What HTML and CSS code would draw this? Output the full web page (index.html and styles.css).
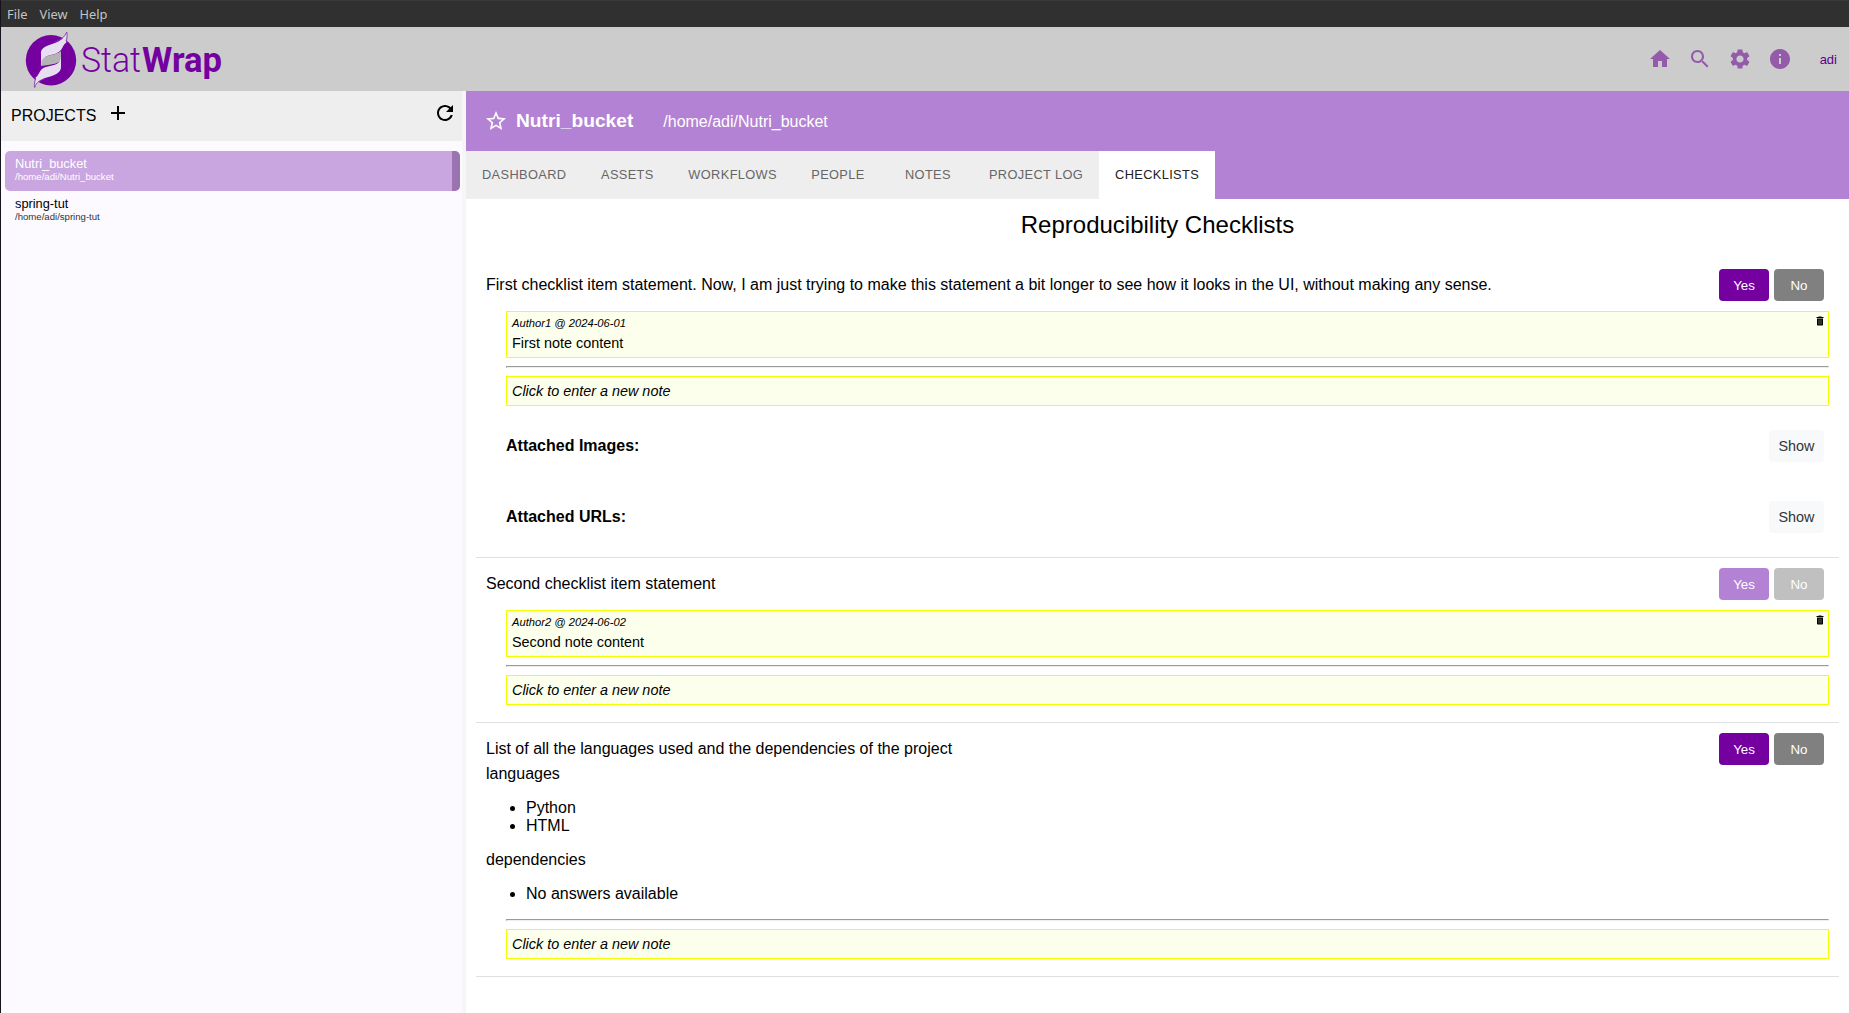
FILE: index.html
```html
<!DOCTYPE html>
<html lang="en">
<head>
<meta charset="utf-8">
<title>StatWrap</title>
<link rel="stylesheet" href="styles.css">
</head>
<body>
<svg class="defs" width="0" height="0">
  <symbol id="trash" viewBox="0 0 24 24"><path d="M6 19c0 1.1.9 2 2 2h8c1.1 0 2-.9 2-2V7H6v12zM19 4h-3.5l-1-1h-5l-1 1H5v2h14V4z"/><path class="slots" d="M10 9v10M14 9v10"/></symbol>
</svg>
<div class="window">
  <nav class="menubar"><span>File</span><span>View</span><span>Help</span></nav>
  <header class="topbar">
    <svg class="logo" width="200" height="64" viewBox="0 0 200 64">
      <circle cx="26" cy="33.3" r="25.2" fill="#7400a0"/>
      <path d="M16 39C15.500 33 17 31 21 29.500C27 27.500 33 27 36 24V33C34 36.500 28 37 23 38Z" fill="#b4b4b4"/>
      <path d="M16 38.500V27C15.500 23 18 20.500 23 18.500C30 16 39 13.500 41.500 6C42 10 39.500 12 41.500 15.500C38 17.500 38 21 35.500 23.500C32 27.500 26 27.500 21 29.500C17.500 31 16 34 16 38.500Z" fill="#e8def2"/>
      <path d="M36 27.500V40C36 44 33 46.500 28 48.500C21 51 13 52 10 59.500C9.500 56 12 53.500 10.500 50.500C13.500 49 14 44.500 17 42C20.500 39 27 39 31.500 37C35 35.500 36 32 36 27.500Z" fill="#e8def2"/>
      <path d="M41.800 5C39 11 35 13 30 15M41.800 5C43 10 41 12 41.800 15.500M9.700 60.500C11 55 16 53 20 51.500M9.700 60.500C8.500 56 11 53 10 50" fill="none" stroke="#8b3cb3" stroke-width=".9"/>
      <text x="56" y="45" class="logo-light" textLength="60" lengthAdjust="spacingAndGlyphs">Stat</text>
      <text x="117" y="45" class="logo-bold" textLength="80" lengthAdjust="spacingAndGlyphs">Wrap</text>
    </svg>
    <div class="actions">
      <svg class="icon" viewBox="0 0 24 24"><path d="M10 20v-6h4v6h5v-8h3L12 3 2 12h3v8z"/></svg>
      <svg class="icon" viewBox="0 0 24 24"><path d="M15.5 14h-.79l-.28-.27C15.41 12.59 16 11.11 16 9.5 16 5.91 13.09 3 9.5 3S3 5.91 3 9.5 5.91 16 9.5 16c1.61 0 3.09-.59 4.23-1.57l.27.28v.79l5 4.99L20.49 19l-4.99-5zm-6 0C7.01 14 5 11.99 5 9.5S7.01 5 9.5 5 14 7.01 14 9.5 11.99 14 9.5 14z"/></svg>
      <svg class="icon" viewBox="0 0 24 24"><path d="M19.14 12.94c.04-.3.06-.61.06-.94 0-.32-.02-.64-.07-.94l2.03-1.58c.18-.14.23-.41.12-.61l-1.92-3.32c-.12-.22-.37-.29-.59-.22l-2.39.96c-.5-.38-1.03-.7-1.62-.94l-.36-2.54c-.04-.24-.24-.41-.48-.41h-3.84c-.24 0-.43.17-.47.41l-.36 2.54c-.59.24-1.13.57-1.62.94l-2.39-.96c-.22-.08-.47 0-.59.22L2.74 8.87c-.12.21-.08.47.12.61l2.03 1.58c-.05.3-.09.63-.09.94s.02.64.07.94l-2.03 1.58c-.18.14-.23.41-.12.61l1.92 3.32c.12.22.37.29.59.22l2.39-.96c.5.38 1.03.7 1.62.94l.36 2.54c.05.24.24.41.48.41h3.84c.24 0 .44-.17.47-.41l.36-2.54c.59-.24 1.13-.56 1.62-.94l2.39.96c.22.08.47 0 .59-.22l1.92-3.32c.12-.22.07-.47-.12-.61l-2.01-1.58zM12 15.6c-1.98 0-3.6-1.62-3.6-3.6s1.62-3.6 3.6-3.6 3.6 1.62 3.6 3.6-1.62 3.6-3.6 3.6z"/></svg>
      <svg class="icon" viewBox="0 0 24 24"><path d="M12 2C6.48 2 2 6.48 2 12s4.48 10 10 10 10-4.48 10-10S17.52 2 12 2zm1 15h-2v-6h2v6zm0-8h-2V7h2v2z"/></svg>
      <span class="user">adi</span>
    </div>
  </header>
  <div class="body">
    <aside class="sidebar">
      <div class="side-head">
        <span>PROJECTS</span>
        <svg class="add" viewBox="0 0 24 24"><path d="M19 13h-6v6h-2v-6H5v-2h6V5h2v6h6v2z"/></svg>
        <svg class="refresh" viewBox="0 0 24 24"><path d="M17.65 6.35C16.2 4.9 14.21 4 12 4c-4.42 0-7.99 3.58-7.99 8s3.57 8 7.99 8c3.73 0 6.84-2.55 7.73-6h-2.08c-.82 2.33-3.04 4-5.65 4-3.31 0-6-2.69-6-6s2.69-6 6-6c1.66 0 3.14.69 4.22 1.78L13 11h7V4l-2.35 2.35z"/></svg>
      </div>
      <div class="project selected"><div class="name">Nutri_bucket</div><div class="dir">/home/adi/Nutri_bucket</div></div>
      <div class="project"><div class="name">spring-tut</div><div class="dir">/home/adi/spring-tut</div></div>
    </aside>
    <main class="main">
      <div class="project-head">
        <svg class="star" viewBox="0 0 24 24"><path d="M22 9.24l-7.19-.62L12 2 9.19 8.63 2 9.24l5.46 4.73L5.82 21 12 17.27 18.18 21l-1.63-7.03L22 9.24zM12 15.4l-3.76 2.27 1-4.28-3.32-2.88 4.38-.38L12 6.1l1.71 4.04 4.38.38-3.32 2.88 1 4.28L12 15.4z"/></svg>
        <span class="project-title">Nutri_bucket</span>
        <span class="project-path">/home/adi/Nutri_bucket</span>
      </div>
      <div class="tabs">
        <div class="tab">DASHBOARD</div><div class="tab">ASSETS</div><div class="tab">WORKFLOWS</div><div class="tab">PEOPLE</div><div class="tab">NOTES</div><div class="tab">PROJECT LOG</div><div class="tab active">CHECKLISTS</div>
      </div>
      <div class="content">
        <h2>Reproducibility Checklists</h2>
        <section class="item">
          <div class="row"><span>First checklist item statement. Now, I am just trying to make this statement a bit longer to see how it looks in the UI, without making any sense.</span><div class="answers"><button class="yes">Yes</button><button class="no">No</button></div></div>
          <div class="notes">
            <div class="note"><div class="author">Author1 @ 2024-06-01</div><div class="text">First note content</div><svg class="trash"><use href="#trash"/></svg></div>
            <hr>
            <div class="new-note">Click to enter a new note</div>
          </div>
          <div class="attached"><b>Attached Images:</b><button class="show">Show</button></div>
          <div class="attached"><b>Attached URLs:</b><button class="show">Show</button></div>
        </section>
        <section class="item">
          <div class="row"><span>Second checklist item statement</span><div class="answers faded"><button class="yes">Yes</button><button class="no">No</button></div></div>
          <div class="notes">
            <div class="note"><div class="author">Author2 @ 2024-06-02</div><div class="text">Second note content</div><svg class="trash"><use href="#trash"/></svg></div>
            <hr>
            <div class="new-note">Click to enter a new note</div>
          </div>
        </section>
        <section class="item">
          <div class="row"><span>List of all the languages used and the dependencies of the project</span><div class="answers"><button class="yes">Yes</button><button class="no">No</button></div></div>
          <div class="group">languages</div>
          <ul><li>Python</li><li>HTML</li></ul>
          <div class="group">dependencies</div>
          <ul><li>No answers available</li></ul>
          <div class="notes flush">
            <hr>
            <div class="new-note">Click to enter a new note</div>
          </div>
        </section>
      </div>
    </main>
  </div>
</div>
</body>
</html>
```
FILE: styles.css
```css
* { box-sizing: border-box; }
body { margin: 0; font: 16px/18px "Liberation Sans", Arial, sans-serif; color: #000; overflow: hidden; }
.defs { position: absolute; }
.window { display: flex; flex-direction: column; height: 1013px; border-left: 1px solid #17131c; }
.menubar { height: 27px; flex: none; background: #303030; border-top: 1px solid #3a3a3a; color: #c4c4c4; display: flex; gap: 12px; padding: 4px 0 0 6px; font: 12.8px/18px "Noto Sans", sans-serif; }
.topbar { height: 64px; flex: none; background: #ccc; display: flex; justify-content: space-between; }
.logo { margin-left: 24px; }
.logo text { font-family: Roboto, sans-serif; font-size: 35px; fill: #7400a0; }
.logo .logo-light { font-weight: 300; }
.logo .logo-bold { font-weight: 700; }
.actions { display: flex; align-items: center; gap: 16px; padding-right: 12px; }
.icon { width: 24px; height: 24px; fill: #935ba9; }
.user { font-size: 13px; color: #5c0087; margin: 2px 0 0 12px; }
.body { flex: 1; display: flex; min-height: 0; }
.sidebar { width: 465px; flex: none; background: #fcfaff; border-right: 4px solid #f6f6f7; }
.side-head { height: 50px; background: #eee; display: flex; align-items: flex-start; padding: 10px 5px 0 10px; margin-bottom: 10px; }
.side-head span { padding-top: 6px; }
.add { width: 24px; height: 24px; margin-left: 10px; }
.refresh { width: 24px; height: 24px; margin-left: auto; }
.project { height: 40px; margin: 0 2px 0 4px; padding: 5px 10px; border-radius: 5px; }
.project.selected { background: #c9a6e0; color: #fff; border-right: 8px solid #9a73b1; }
.name { font-size: 12.8px; line-height: 15px; }
.dir { font-size: 9.6px; line-height: 11px; color: #333; }
.selected .dir { color: #fff; }
.main { flex: 1; background: #fff; }
.project-head { height: 60px; background: #b482d4; color: #fff; display: flex; align-items: center; padding-left: 18px; }
.star { width: 24px; height: 24px; fill: #fff; }
.project-title { font-size: 19.2px; font-weight: bold; margin-left: 8px; }
.project-path { margin: 1px 0 0 30px; }
.tabs { height: 48px; background: #b482d4; display: flex; }
.tab { min-width: 90px; padding: 0 16px; background: #eee; color: #666; font-size: 12.8px; line-height: 48px; letter-spacing: .366px; text-align: center; }
.tab.active { background: #fff; color: #222; }
.content { padding: 10px; }
h2 { margin: 0 0 20px; padding-top: 2px; font-size: 24px; line-height: 28px; font-weight: normal; text-align: center; }
.item { padding: 10px 10px 17px; border-bottom: 1px solid #e0e0e0; }
.row { display: flex; justify-content: space-between; align-items: center; height: 32px; }
.answers { display: flex; gap: 5px; margin-right: 5px; }
button { border: 0; border-radius: 4px; height: 32px; width: 50px; padding: 0; color: #fff; font: 13.33px "Liberation Sans", Arial, sans-serif; }
.yes { background: #7400a0; }
.no { background: #808080; }
.faded .yes { background: #b482d4; }
.faded .no { background: #c0c0c0; }
.notes { margin: 10px 0 0 20px; }
.notes.flush { margin-top: 0; }
.note, .new-note { border: 1px solid #f2ff00; background: #fcffeb; padding: 5px; font-size: 14.4px; }
.note { position: relative; height: 47px; }
.author { font-size: 11.2px; line-height: 13px; font-style: italic; }
.text { line-height: 17px; margin-top: 5px; }
.trash { position: absolute; width: 12px; height: 12px; right: 2px; top: 3px; }
.slots { stroke: #a5a69b; stroke-width: 1.2; fill: none; }
hr { margin: 8px 0; }
.flush hr { margin-top: 16px; }
.new-note { height: 30px; font-style: italic; }
.attached { display: flex; justify-content: space-between; align-items: center; height: 32px; margin: 24px 5px 39px 20px; }
.attached:last-child { margin: 0 5px 7px 20px; }
.show { width: 55px; background: #f8f9fa; color: #333; font-size: 14.4px; }
ul { margin: 16px 0; padding-left: 40px; }
ul:last-of-type { margin-bottom: 0; }
```
